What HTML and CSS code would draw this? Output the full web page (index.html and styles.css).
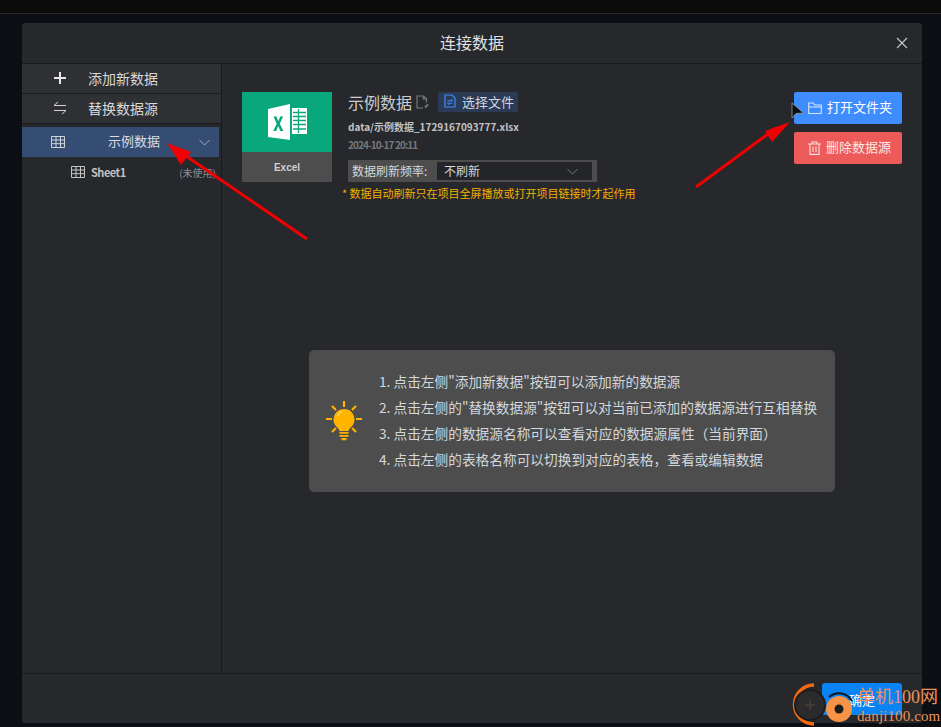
FILE: index.html
```html
<!DOCTYPE html>
<html lang="zh">
<head>
    <meta charset="UTF-8">
    <title>连接数据</title>
    <link rel="stylesheet" href="styles.css">
</head>
<body>
    <div class="topbar"></div>

    <div class="dialog">
        <div class="dialog-header">
            <span class="dialog-title">连接数据</span>
            <svg class="close-icon" width="12" height="12" viewBox="0 0 12 12"><path d="M1 1l10 10M11 1L1 11" stroke="#c8c8c8" stroke-width="1.1" fill="none"/></svg>
        </div>

        <div class="dialog-body">
            <div class="sidebar">
                <div class="side-action">
                    <svg class="side-action-icon" width="14" height="14" viewBox="0 0 14 14"><path d="M7 1v12M1 7h12" stroke="#e6e6e6" stroke-width="2" fill="none"/></svg>
                    <span>添加新数据</span>
                </div>
                <div class="side-action">
                    <svg class="side-action-icon" width="14" height="14" viewBox="0 0 14 14"><path d="M13 4.5H1L5 1M1 9.5h12L9 13" stroke="#d2d2d2" stroke-width="1" fill="none"/></svg>
                    <span>替换数据源</span>
                </div>
                <div class="source-row">
                    <svg class="source-icon" width="14" height="12" viewBox="0 0 14 12"><path d="M.5.5h13v11H.5zM.5 4h13M.5 7.7h13M5 .5v11M9.500 .5v11" stroke="#cfd4dc" stroke-width="1" fill="none"/></svg>
                    <span class="source-name">示例数据</span>
                    <svg class="source-caret" width="11" height="7" viewBox="0 0 11 7"><path d="M.5 1l5 5 5-5" stroke="#a9afb8" stroke-width="1" fill="none"/></svg>
                </div>
                <div class="sheet-row">
                    <svg width="14" height="12" viewBox="0 0 14 12"><path d="M.5.5h13v11H.5zM.5 4h13M.5 7.700h13M5 .5v11M9.500 .5v11" stroke="#c4c4c4" stroke-width="1" fill="none"/></svg>
                    <span class="sheet-name">Sheet1</span>
                    <span class="sheet-state">(未使用)</span>
                </div>
            </div>

            <div class="content">
                <div class="source-detail">
                    <div class="excel-card">
                        <div class="excel-logo">
                            <svg width="39" height="36" viewBox="0 0 39 36">
                                <path d="M0 5L22 0v36L0 33z" fill="#fff"/>
                                <path d="M24 4h15v26H24z" fill="#fff"/>
                                <path d="M25 8.500h13M25 12.500h13M25 16.500h13M25 20.500h13M25 25h13M30.500 5v24" stroke="#09a87c" stroke-width="1.300" fill="none"/>
                                <path d="M5.500 12.500l3.200 7.200-3.500 7.300h3l2-4.900 2.100 4.900h3.100l-3.600-7.300 3.300-7.200h-2.900l-1.900 4.700-1.900-4.700z" fill="#09a87c"/>
                            </svg>
                        </div>
                        <div class="excel-label">Excel</div>
                    </div>

                    <div class="source-info">
                        <div class="info-title">
                            <span class="info-name">示例数据</span>
                            <svg width="13" height="14" viewBox="0 0 13 14"><path d="M7 13H1V1h6.500l3 3v3.500M7.500 1v3h3" stroke="#77787b" stroke-width="1.200" fill="none"/><path d="M9 12.500l3-3" stroke="#77787b" stroke-width="2" fill="none"/></svg>
                            <span class="file-btn">
                                <svg width="12" height="14" viewBox="0 0 12 14"><path d="M1 1h7l3 3v9H1z" stroke="#3f8cff" stroke-width="1.200" fill="none"/><path d="M3.500 6.800h5L6.800 5M8.500 9.200h-5L5.200 11" stroke="#3f8cff" stroke-width="1" fill="none"/></svg>
                                选择文件
                            </span>
                        </div>
                        <div class="info-path">data/示例数据_1729167093777.xlsx</div>
                        <div class="info-date">2024-10-17 20:11</div>
                        <div class="refresh-row">
                            <span class="refresh-label">数据刷新频率:</span>
                            <div class="refresh-select">
                                <span>不刷新</span>
                                <svg width="11" height="7" viewBox="0 0 11 7"><path d="M.5 1l5 5 5-5" stroke="#777" stroke-width="1" fill="none"/></svg>
                            </div>
                        </div>
                        <div class="refresh-note">* 数据自动刷新只在项目全屏播放或打开项目链接时才起作用</div>
                    </div>

                    <div class="source-buttons">
                        <div class="btn btn-blue">
                            <svg width="14" height="13" viewBox="0 0 14 13"><path d="M.7 11.500V1h4.500l1.500 2h6.600v8.500zM.7 5h12.600" stroke="#d5e5ff" stroke-width="1.100" fill="none"/></svg>
                            <span>打开文件夹</span>
                        </div>
                        <div class="btn btn-red">
                            <svg width="13" height="14" viewBox="0 0 13 14"><path d="M0 3h13M4 3V1h5v2M2 3v10.400h9V3M5 5.500v5.500M8 5.500v5.500" stroke="#fbe0e0" stroke-width="1.100" fill="none"/></svg>
                            <span>删除数据源</span>
                        </div>
                    </div>
                </div>

                <div class="tip-box">
                    <svg class="tip-icon" width="38" height="42" viewBox="0 0 38 42">
                        <path d="M19 1v6M1 19h6M31 19h6M7 6l4 4M31 6l-4 4M7 32l4-4M31 32l-4-4" stroke="#ffb400" stroke-width="2.200" fill="none"/>
                        <path d="M19 9a10.500 10.500 0 0 0-6.500 18.700c1.300 1.100 1.800 2 1.800 3.300h9.400c0-1.300.5-2.200 1.800-3.300A10.500 10.500 0 0 0 19 9z" fill="#ffb400"/>
                        <path d="M14.500 32h9v1.800h-9zM14.500 35h9v1.800h-9zM16.500 38h5v2.200h-5z" fill="#ffb400"/>
                        <path d="M12.500 16.500a7 7 0 0 1 4.500-5" stroke="#ffe9ad" stroke-width="1" fill="none"/>
                    </svg>
                    <ol class="tip-list">
                        <li>1. 点击左侧"添加新数据"按钮可以添加新的数据源</li>
                        <li>2. 点击左侧的"替换数据源"按钮可以对当前已添加的数据源进行互相替换</li>
                        <li>3. 点击左侧的数据源名称可以查看对应的数据源属性（当前界面）</li>
                        <li>4. 点击左侧的表格名称可以切换到对应的表格，查看或编辑数据</li>
                    </ol>
                </div>
            </div>
        </div>

        <div class="dialog-footer">
            <div class="btn-ok">确定</div>
        </div>
    </div>

    <!-- annotation arrows, drawn over the screenshot -->
    <svg class="annotations" width="941" height="727" viewBox="0 0 941 727">
        <path d="M307 239L186 156" stroke="#f00000" stroke-width="3" fill="none"/>
        <path d="M167 143L191 152L181 165z" fill="#f00000"/>
        <path d="M696 187L776 128" stroke="#f00000" stroke-width="3" fill="none"/>
        <path d="M790 122L772 142L765 131z" fill="#f00000"/>
        <path d="M792 103L803.500 113L796 113.500L792 118z" fill="#0e0f12" stroke="#9a9a9a" stroke-width="0.800"/>
    </svg>

    <!-- site watermark -->
    <div class="watermark">
        <svg class="wm-logo" width="64" height="44" viewBox="0 0 64 44">
            <path d="M24 2A19.500 19.500 0 0 0 24 41" stroke="#f26a0c" stroke-width="3.500" fill="none"/>
            <circle cx="20" cy="22" r="15" fill="#2b2b2d" stroke="#1d1d1f" stroke-width="2"/>
            <path d="M15 22h10M20 17v10" stroke="#4a4037" stroke-width="1.500"/>
            <circle cx="49" cy="26" r="13" fill="#f79346"/>
            <path d="M39 14A15 15 0 0 1 62 18" stroke="#151517" stroke-width="2" fill="none"/>
            <circle cx="49" cy="26" r="4.500" fill="#1e1c1b"/>
        </svg>
        <div class="wm-text">
            <span class="wm-name">单机100网</span>
            <span class="wm-url">danji100.com</span>
        </div>
    </div>
</body>
</html>
```

FILE: styles.css
```css
* {
    box-sizing: border-box;
}
html, body {
    height: 727px;
    overflow: hidden;
}
body {
    margin: 0;
    background: #0b0e13;
    font-family: "Noto Sans CJK SC", "Liberation Sans", sans-serif;
    color: #d6d6d6;
    position: relative;
}
.topbar {
    height: 14px;
    background: #0b0b0b;
    border-bottom: 1px solid #2a2a2a;
    margin-bottom: 9px;
}
.dialog {
    width: 900px;
    height: 700px;
    margin-left: 22px;
    background: #26282c;
    border-radius: 3px;
    display: flex;
    flex-direction: column;
}
.dialog-header {
    height: 41px;
    flex: none;
    border-bottom: 1px solid #18191c;
    display: flex;
    align-items: center;
    justify-content: center;
    position: relative;
    padding-bottom: 3px;
}
.dialog-title {
    font-size: 16px;
    color: #e2e2e2;
}
.close-icon {
    position: absolute;
    right: 14px;
    top: 14px;
}
.dialog-body {
    flex: 1;
    display: flex;
    min-height: 0;
}
.sidebar {
    width: 200px;
    flex: none;
    border-right: 1px solid #18191c;
}
.side-action {
    height: 30px;
    width: 199px;
    background: #2e3034;
    border-bottom: 1px solid #1b1c1f;
    display: flex;
    align-items: center;
    font-size: 14px;
    color: #d8d8d8;
    padding-left: 31px;
    padding-bottom: 1px;
}
.side-action-icon {
    margin-right: 21px;
}
.source-row {
    height: 30px;
    width: 197px;
    margin-top: 3px;
    background: #354d72;
    display: flex;
    align-items: center;
    padding-left: 29px;
    font-size: 13px;
    color: #d8dde4;
}
.source-name {
    margin-left: 43px;
    margin-top: -3px;
}
.source-caret {
    margin-left: 39px;
}
.sheet-row {
    height: 30px;
    display: flex;
    align-items: center;
    padding-left: 49px;
    font-size: 11px;
    font-weight: bold;
    color: #c0c0c0;
}
.sheet-name {
    margin-left: 6px;
    letter-spacing: -0.5px;
    margin-top: -1px;
}
.sheet-state {
    margin-left: auto;
    margin-right: 5px;
    font-weight: normal;
    font-size: 10px;
    color: #8f8f8f;
}
.content {
    flex: 1;
    padding: 28px 20px 0 20px;
    min-width: 0;
}
.source-detail {
    display: flex;
    height: 90px;
}
.excel-card {
    width: 90px;
    height: 90px;
    flex: none;
}
.excel-logo {
    height: 60px;
    background: #09a87c;
    display: flex;
    align-items: center;
    justify-content: center;
}
.excel-label {
    height: 30px;
    background: #4d4d4d;
    display: flex;
    align-items: center;
    justify-content: center;
    font-size: 10px;
    font-weight: bold;
    color: #cfcfcf;
    font-family: "Liberation Sans", sans-serif;
}
.source-info {
    margin-left: 16px;
    flex: 1;
    min-width: 0;
}
.info-title {
    display: flex;
    align-items: center;
    height: 20px;
}
.info-name {
    font-size: 16px;
    color: #cccccc;
    margin-right: 4px;
    margin-top: -1px;
}
.file-btn {
    display: flex;
    align-items: center;
    gap: 6px;
    height: 20px;
    margin-left: 9px;
    padding: 0 4px 2px 6px;
    background: #2c3b55;
    border-radius: 2px;
    font-size: 13px;
    color: #cfd6e0;
}
.info-path {
    margin-top: 7px;
    height: 16px;
    line-height: 16px;
    font-size: 10px;
    font-weight: bold;
    color: #c2c2c2;
}
.info-date {
    margin-top: 3px;
    height: 14px;
    line-height: 14px;
    font-size: 10px;
    font-weight: bold;
    letter-spacing: -0.9px;
    color: #77787b;
}
.refresh-row {
    margin-top: 8px;
    width: 249px;
    height: 22px;
    background: #4d4d4d;
    display: flex;
    align-items: center;
    padding: 2px 5px 2px 4px;
}
.refresh-label {
    font-size: 12px;
    width: 85px;
    flex: none;
    color: #d4d8dc;
    margin-top: -2px;
}
.refresh-select {
    flex: 1;
    height: 18px;
    background: #232528;
    display: flex;
    align-items: center;
    justify-content: space-between;
    padding: 0 14px 0 7px;
    font-size: 12px;
    color: #d6d6d6;
}
.refresh-select span {
    margin-top: -2px;
}
.refresh-note {
    margin-top: 3px;
    margin-left: -6px;
    white-space: nowrap;
    font-size: 11px;
    color: #f5ae00;
}
.source-buttons {
    width: 108px;
    flex: none;
    display: flex;
    flex-direction: column;
    gap: 8px;
}
.btn {
    height: 32px;
    border-radius: 2px;
    display: flex;
    align-items: center;
    padding-left: 14px;
    gap: 5px;
    font-size: 13px;
    color: #fff;
}
.btn span {
    margin-top: -3px;
}
.btn-blue {
    background: #3f8cff;
}
.btn-red {
    background: #ec5a5a;
    color: #fbe6e6;
}
.tip-box {
    margin-top: 168px;
    margin-left: 67px;
    width: 526px;
    height: 142px;
    background: #4d4d4d;
    border-radius: 5px;
    display: flex;
    align-items: center;
    padding-left: 16px;
}
.tip-icon {
    flex: none;
}
.tip-list {
    list-style: none;
    margin: 0 0 0 16px;
    padding: 0;
    font-size: 13.7px;
    color: #d2d8de;
}
.tip-list li {
    height: 26px;
    line-height: 25px;
    white-space: nowrap;
}
.dialog-footer {
    height: 50px;
    flex: none;
    border-top: 1px solid #18191c;
    padding: 9px 20px 0 0;
    display: flex;
    justify-content: flex-end;
}
.btn-ok {
    width: 80px;
    height: 32px;
    background: #0a84f5;
    border-radius: 3px;
    color: #fff;
    font-size: 13px;
    display: flex;
    align-items: center;
    justify-content: center;
}
.annotations {
    position: absolute;
    left: 0;
    top: 0;
    pointer-events: none;
}
.watermark {
    position: absolute;
    left: 790px;
    top: 683px;
    width: 151px;
    height: 44px;
}
.wm-logo {
    position: absolute;
    left: 0;
    top: 0;
}
.wm-text {
    position: absolute;
    left: 67px;
    top: 3px;
    display: flex;
    flex-direction: column;
    color: #f0925a;
    font-family: "Liberation Serif", "Noto Sans CJK SC", serif;
    white-space: nowrap;
}
.wm-name {
    font-size: 18px;
    line-height: 22px;
}
.wm-url {
    font-size: 15px;
    line-height: 16px;
    letter-spacing: 0.1px;
}
```
